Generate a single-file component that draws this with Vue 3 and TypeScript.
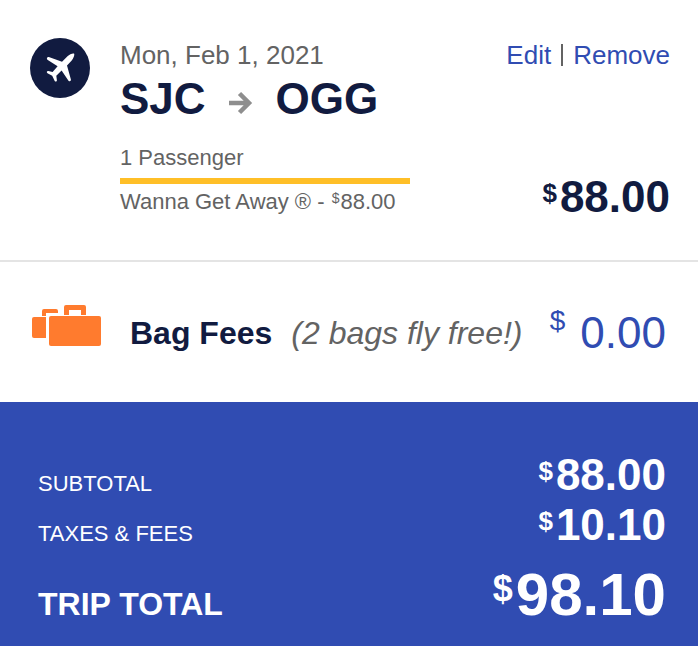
<script setup lang="ts">
interface Charge {
  label: string
  amount: string
  total?: boolean
}

const flight = {
  date: 'Mon, Feb 1, 2021',
  from: 'SJC',
  to: 'OGG',
  passengers: '1 Passenger',
  fare: 'Wanna Get Away ®',
  price: '88.00',
}

const charges: Charge[] = [
  { label: 'SUBTOTAL', amount: '88.00' },
  { label: 'TAXES & FEES', amount: '10.10' },
  { label: 'TRIP TOTAL', amount: '98.10', total: true },
]
</script>

<template>
  <main class="cart">
    <section class="flight">
      <svg class="plane" viewBox="0 0 60 60" aria-hidden="true">
        <circle cx="30" cy="30" r="30" fill="#111b40" />
        <path
          d="M44 15.600C43 14.900 39.500 16.200 37.500 18.200L32 23.800L18.800 19.100C17.300 18.700 16.200 20.600 17.400 21.700L27.600 28.200L22.600 34L18.300 33C16.800 32.800 16.300 34.500 17.500 35.200L22.200 37.800L24.700 42.900C25.400 44 27 43.500 26.900 42.200L26.300 37.800L31.600 32.600L38.500 42.800C39.600 44 41.200 43 40.900 41.600L37 27.600L41.500 22.700C43.700 20.300 44.900 16.700 44 15.600Z"
          fill="#fff"
        />
      </svg>
      <div class="details">
        <div class="top-line">
          <span>{{ flight.date }}</span>
          <nav class="actions" aria-label="Flight">
            <a href="#edit">Edit</a>
            <span class="bar"></span>
            <a href="#remove">Remove</a>
          </nav>
        </div>
        <h2 class="route">
          <span>{{ flight.from }}</span>
          <svg class="arrow" viewBox="0 0 24 24" aria-hidden="true">
            <path d="M0 12H19M10.500 2.500L20 12L10.500 21.500" fill="none" stroke="#8e8e8e" stroke-width="4.500" />
          </svg>
          <span>{{ flight.to }}</span>
        </h2>
        <div class="fare-line">
          <div class="fare">
            <p class="passengers">{{ flight.passengers }}</p>
            <p class="product">{{ flight.fare }} - <span class="mini">$</span>{{ flight.price }}</p>
          </div>
          <p class="price navy"><span class="currency">$</span>{{ flight.price }}</p>
        </div>
      </div>
    </section>

    <section class="bags">
      <svg class="luggage" viewBox="0 0 70 56" aria-hidden="true">
        <g fill="#ff7b2e">
          <path d="M2 12H14V33H2Q0 33 0 31V14Q0 12 2 12Z" />
          <path d="M10 11V6Q10 4 12 4H24Q26 4 26 6V8H14V11Z" />
          <path d="M32 10V2Q32 0 34 0H52Q54 0 54 2V10H49V5H37V10Z" />
          <rect x="17" y="11" width="52" height="30" rx="2" />
        </g>
      </svg>
      <h3>Bag Fees</h3>
      <em>(2 bags fly free!)</em>
      <p class="price light"><span class="currency">$</span>0.00</p>
    </section>

    <dl class="totals">
      <div v-for="c in charges" :key="c.label" class="row" :class="{ total: c.total }">
        <dt>{{ c.label }}</dt>
        <dd class="price"><span class="currency">$</span>{{ c.amount }}</dd>
      </div>
    </dl>
  </main>
</template>

<style>
body {
  margin: 0;
  background: #fff;
}
</style>

<style scoped>
.cart {
  font-family: "Liberation Sans", Arial, sans-serif;
  color: #636363;
}
h2,
h3,
p,
dl,
dd {
  margin: 0;
}
.flight {
  display: flex;
  gap: 30px;
  padding: 38px 28px 39px 30px;
  border-bottom: 2px solid #e4e4e4;
}
.plane {
  flex: none;
  width: 60px;
  height: 60px;
}
.details {
  flex: 1;
}
.top-line {
  display: flex;
  justify-content: space-between;
  font-size: 26px;
  line-height: 34px;
}
.actions {
  display: flex;
  align-items: center;
  gap: 10px;
}
.actions a {
  color: #304cb2;
  text-decoration: none;
}
.bar {
  width: 2px;
  height: 22px;
  background: #636363;
}
.route {
  display: flex;
  align-items: center;
  gap: 23px;
  color: #111b40;
  font-size: 44px;
  line-height: 54px;
}
.arrow {
  width: 24px;
  height: 24px;
  margin-top: 8px;
}
.fare-line {
  display: flex;
  justify-content: space-between;
  align-items: flex-end;
  margin-top: 18px;
}
.fare {
  width: 290px;
  padding-bottom: 5px;
  font-size: 22px;
  line-height: 28px;
}
.passengers {
  padding-bottom: 6px;
  border-bottom: 6px solid #ffbf27;
}
.product {
  padding-top: 4px;
}
.mini {
  margin: 0 1px;
  font-size: 14px;
  line-height: 14px;
  vertical-align: 6px;
}
.price {
  display: flex;
  align-items: flex-start;
  gap: 3px;
  font-size: 44px;
  font-weight: 700;
  line-height: 48px;
}
.currency {
  font-size: 26px;
  line-height: 40px;
}
.navy {
  color: #111b40;
}
.bags {
  display: flex;
  align-items: center;
  padding: 43px 32px 41px;
}
.luggage {
  flex: none;
  width: 70px;
  height: 56px;
}
.bags h3 {
  margin-left: 28px;
  color: #111b40;
  font-size: 32px;
  line-height: 36px;
}
.bags em {
  margin-left: 19px;
  font-size: 32px;
  line-height: 36px;
}
.light {
  gap: 15px;
  margin-left: auto;
  color: #304cb2;
  font-weight: 400;
}
.light .currency {
  font-size: 28px;
  line-height: 24px;
}
.totals {
  padding: 48px 32px 17px 38px;
  background: #304cb2;
  color: #fff;
}
.row {
  display: flex;
  justify-content: space-between;
  align-items: flex-end;
}
.row dt {
  font-size: 22px;
  line-height: 32px;
}
.row dd {
  line-height: 50px;
}
.row .currency {
  line-height: 42px;
}
.total {
  align-items: baseline;
  margin-top: 11px;
}
.total dt {
  font-size: 32px;
  font-weight: 700;
}
.total dd {
  align-items: baseline;
  font-size: 60px;
  line-height: 68px;
}
.total .currency {
  align-self: flex-start;
  font-size: 36px;
  line-height: 56px;
}
</style>
